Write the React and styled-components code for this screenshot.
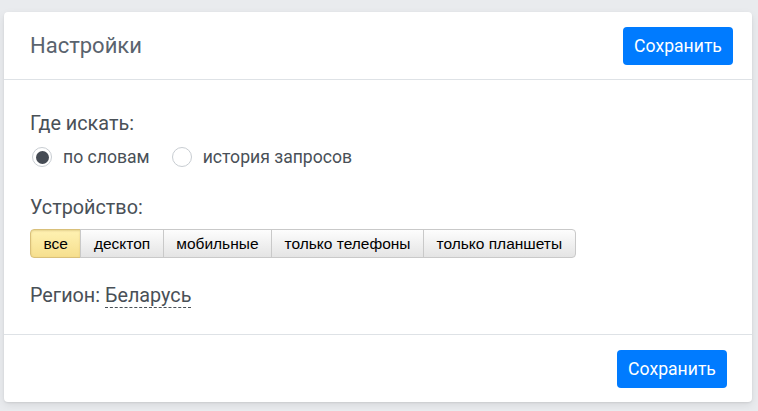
import React, { useState } from 'react';
import styled, { createGlobalStyle } from 'styled-components';

const GlobalStyle = createGlobalStyle`
  html, body {
    margin: 0;
    padding: 0;
    background: #e9ebee;
  }
  body {
    font-family: Roboto, 'Noto Sans', sans-serif;
    color: #495057;
  }
`;

// Layout
const Page = styled.div`
  padding: 12px 6px 8px 4px;
`;

const Card = styled.div`
  background: #fff;
  border-radius: 4px;
  box-shadow: 0 1px 2px rgba(0, 0, 0, 0.08), 0 3px 8px rgba(0, 0, 0, 0.08);
  display: flex;
  flex-direction: column;
`;

const Header = styled.div`
  height: 68px;
  box-sizing: border-box;
  display: flex;
  align-items: center;
  justify-content: space-between;
  padding: 0 19px 0 26px;
  border-bottom: 1px solid #dee2e6;
`;

const Title = styled.h1`
  margin: 0;
  font-size: 22px;
  font-weight: 400;
  color: #5a636e;
`;

const SaveButton = styled.button`
  height: 38px;
  width: 110px;
  border: none;
  border-radius: 4px;
  background: #007bff;
  color: #fff;
  font-family: Roboto, sans-serif;
  font-size: 17.6px;
  cursor: pointer;
  padding: 0;
`;

const Body = styled.div`
  padding: 32px 26px 26px;
  display: flex;
  flex-direction: column;
`;

const Label = styled.div`
  font-size: 19.8px;
  line-height: 24px;
  margin-bottom: ${(p) => p.gap || 0}px;
`;

const RadioRow = styled.div`
  display: flex;
  align-items: center;
  height: 22px;
  gap: 22px;
  margin-bottom: 28px;
  padding-left: 2px;
`;

const RadioLabel = styled.label`
  display: flex;
  align-items: center;
  gap: 11px;
  font-size: 17.6px;
  cursor: pointer;
`;

const RadioCircle = styled.span`
  width: 20px;
  height: 20px;
  box-sizing: border-box;
  border-radius: 50%;
  border: 1px solid #c8cdd2;
  background: #fff;
  display: flex;
  align-items: center;
  justify-content: center;
  &::after {
    content: '';
    width: 13px;
    height: 13px;
    border-radius: 50%;
    background: ${(p) => (p.checked ? '#454b54' : 'transparent')};
  }
`;

const Segments = styled.div`
  display: flex;
  margin-bottom: 26px;
`;

const Segment = styled.button`
  height: 29px;
  padding: 0 12.5px;
  font-family: 'Liberation Sans', Arial, sans-serif;
  font-size: 15.5px;
  color: #000;
  cursor: pointer;
  border: 1px solid ${(p) => (p.active ? '#d9c07a' : '#c9c9c9')};
  margin-left: -1px;
  background: ${(p) =>
    p.active
      ? 'linear-gradient(#fff2b3, #f6df8e)'
      : 'linear-gradient(#fdfdfd, #e4e4e4)'};
  box-shadow: ${(p) => (p.active ? 'inset 0 1px 2px rgba(150,120,30,.25)' : 'none')};
  &:first-child {
    margin-left: 0;
    border-radius: 4px 0 0 4px;
  }
  &:last-child {
    border-radius: 0 4px 4px 0;
  }
`;

const Region = styled.div`
  font-size: 19.8px;
  line-height: 24px;
`;

const RegionLink = styled.span`
  border-bottom: 1px dashed #495057;
  cursor: pointer;
`;

const Footer = styled.div`
  height: 68px;
  box-sizing: border-box;
  display: flex;
  align-items: center;
  justify-content: flex-end;
  padding: 0 25px 0 26px;
  border-top: 1px solid #dee2e6;
`;

const devices = ['все', 'десктоп', 'мобильные', 'только телефоны', 'только планшеты'];

export default function App() {
  const [where, setWhere] = useState('words');
  const [device, setDevice] = useState('все');

  return (
    <>
      <GlobalStyle />
      <Page>
        <Card>
          <Header>
            <Title>Настройки</Title>
            <SaveButton>Сохранить</SaveButton>
          </Header>
          <Body>
            <Label gap={10}>Где искать:</Label>
            <RadioRow>
              <RadioLabel onClick={() => setWhere('words')}>
                <RadioCircle checked={where === 'words'} />
                по словам
              </RadioLabel>
              <RadioLabel onClick={() => setWhere('history')}>
                <RadioCircle checked={where === 'history'} />
                история запросов
              </RadioLabel>
            </RadioRow>
            <Label gap={9}>Устройство:</Label>
            <Segments>
              {devices.map((d) => (
                <Segment key={d} active={d === device} onClick={() => setDevice(d)}>
                  {d}
                </Segment>
              ))}
            </Segments>
            <Region>
              Регион: <RegionLink>Беларусь</RegionLink>
            </Region>
          </Body>
          <Footer>
            <SaveButton>Сохранить</SaveButton>
          </Footer>
        </Card>
      </Page>
    </>
  );
}
